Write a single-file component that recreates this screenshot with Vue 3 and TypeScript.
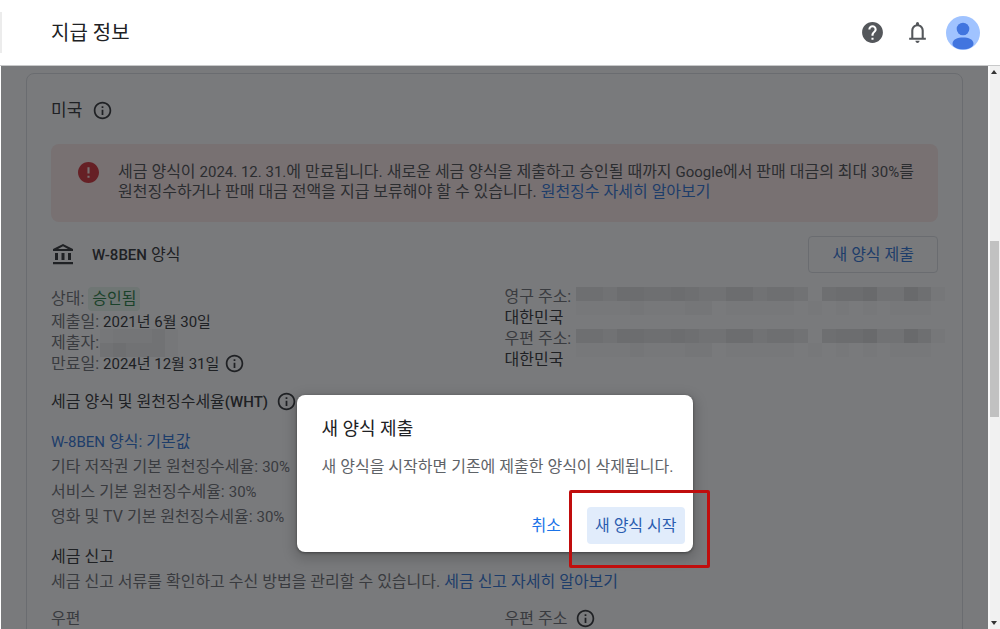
<script setup lang="ts">
interface Rate {
  label: string
  value: string
}

const rates: Rate[] = [
  { label: '기타 저작권 기본 원천징수세율:', value: '30%' },
  { label: '서비스 기본 원천징수세율:', value: '30%' },
  { label: '영화 및 TV 기본 원천징수세율:', value: '30%' },
]

// Strength of each masking cell, from 0 (clear) to 7 (darkest)
const maskTop = [4, 4, 3, 5, 5, 4, 4, 5, 4, 3, 3, 5, 5, 3, 4, 4, 3, 0, 4, 5, 5, 6, 3, 3, 6, 4, 1]
const maskBottom = [1, 1, 1, 1, 2, 1, 1, 1, 2, 2, 0, 1, 1, 1, 1, 1, 0, 1, 0, 1, 0, 1, 0, 1, 1, 1, 0]
const addressMask = [...maskTop.map((n) => n * 0.03), ...maskBottom.map((n) => n * 0.02)]
const nameMask = [1, 2, 2, 2, 3, 1, 3, 4, 3, 3, 3, 1].map((n) => n * 0.03)
const addresses = ['영구 주소:', '우편 주소:']
</script>

<template>
  <div class="page">
    <header class="topbar">
      <h1>지급 정보</h1>
      <button class="icon-btn" type="button" aria-label="도움말">
        <svg width="25" height="25" viewBox="0 0 24 24" fill="#54575b">
          <path d="M12 2C6.48 2 2 6.48 2 12s4.48 10 10 10 10-4.48 10-10S17.52 2 12 2zm1 17h-2v-2h2v2zm2.07-7.75-.9.92C13.45 12.9 13 13.5 13 15h-2v-.5c0-1.1.45-2.1 1.17-2.83l1.24-1.26c.37-.36.59-.86.59-1.41 0-1.1-.9-2-2-2s-2 .9-2 2H8c0-2.21 1.79-4 4-4s4 1.79 4 4c0 .88-.36 1.68-.93 2.25z" />
        </svg>
      </button>
      <button class="icon-btn bell" type="button" aria-label="알림">
        <svg width="25" height="25" viewBox="0 0 24 24" fill="#54575b">
          <path d="M4 19v-2h2v-7c0-2.8 1.7-5.1 4.5-5.8v-.7a1.5 1.5 0 0 1 3 0v.7C16.300 4.900 18 7.200 18 10v7h2v2zM12 22c-1.100 0-2-.9-2-2h4c0 1.100-.9 2-2 2zM8 17h8v-7c0-2.200-1.800-4-4-4s-4 1.800-4 4z" />
        </svg>
      </button>
      <button class="icon-btn" type="button" aria-label="계정">
        <svg width="34" height="34" viewBox="0 0 34 34">
          <defs><clipPath id="face"><circle cx="17" cy="17" r="17" /></clipPath></defs>
          <g clip-path="url(#face)">
            <rect width="34" height="34" fill="#a0c3ff" />
            <circle cx="17" cy="13" r="6.300" fill="#4175df" />
            <path d="M6.500 28c0-5 5-6.500 10.500-6.500S27.500 23 27.500 28c0 3-5 5.300-10.500 5.300S6.500 31 6.500 28z" fill="#4175df" />
          </g>
        </svg>
      </button>
    </header>

    <div class="body">
      <main class="content">
        <section class="card">
          <div class="country">
            <h2>미국</h2>
            <svg class="info" viewBox="0 0 24 24"><path d="M11 7h2v2h-2zm0 4h2v6h-2zm1-9C6.480 2 2 6.480 2 12s4.480 10 10 10 10-4.480 10-10S17.520 2 12 2zm0 18c-4.410 0-8-3.590-8-8s3.590-8 8-8 8 3.590 8 8-3.590 8-8 8z" /></svg>
          </div>

          <div class="alert" role="alert">
            <svg class="alert-icon" viewBox="2 2 20 20"><path d="M12 2C6.480 2 2 6.480 2 12s4.480 10 10 10 10-4.480 10-10S17.520 2 12 2zm1 15h-2v-2h2v2zm0-4h-2V7h2v6z" /></svg>
            <p>
              세금 양식이 <span class="latin">2024. 12. 31.</span>에 만료됩니다. 새로운 세금 양식을 제출하고 승인될 때까지 <span class="latin">Google</span>에서 판매 대금의 최대 <span class="latin">30%</span>를<br />
              원천징수하거나 판매 대금 전액을 지급 보류해야 할 수 있습니다. <a href="#">원천징수 자세히 알아보기</a>
            </p>
          </div>

          <div class="form-head">
            <svg class="bank" viewBox="0 0 24 24"><path d="M7 10H4v7h3zM13.500 10h-3v7h3zM22 19H2v2.200h20zM20 10h-3v7h3zM12 3.300 17 6H7zM12 1 2 6v2h20V6z" /></svg>
            <h3><span class="latin">W-8BEN</span> 양식</h3>
            <button class="outline-btn" type="button">새 양식 제출</button>
          </div>

          <div class="columns details">
            <div class="left">
              <p class="status">상태: <span class="pill">승인됨</span></p>
              <p>제출일: <b class="latin">2021년 6월 30일</b></p>
              <p class="masked">
                제출자:
                <span class="mask mask-name"><i v-for="(a, i) in nameMask" :key="i" :style="{ opacity: a }"></i></span>
              </p>
              <p class="with-icon">
                <span>만료일: <b class="latin">2024년 12월 31일</b></span>
                <svg class="info" viewBox="0 0 24 24"><path d="M11 7h2v2h-2zm0 4h2v6h-2zm1-9C6.480 2 2 6.480 2 12s4.480 10 10 10 10-4.480 10-10S17.520 2 12 2zm0 18c-4.410 0-8-3.590-8-8s3.590-8 8-8 8 3.590 8 8-3.590 8-8 8z" /></svg>
              </p>
            </div>
            <div>
              <template v-for="label in addresses" :key="label">
                <p class="masked">
                  {{ label }}
                  <span class="mask mask-address"><i v-for="(a, i) in addressMask" :key="i" :style="{ opacity: a }"></i></span>
                </p>
                <p><b>대한민국</b></p>
              </template>
            </div>
          </div>

          <div class="with-icon wht">
            <h3>세금 양식 및 원천징수세율<span class="latin">(WHT)</span></h3>
            <svg class="info" viewBox="0 0 24 24"><path d="M11 7h2v2h-2zm0 4h2v6h-2zm1-9C6.480 2 2 6.480 2 12s4.480 10 10 10 10-4.480 10-10S17.520 2 12 2zm0 18c-4.410 0-8-3.590-8-8s3.590-8 8-8 8 3.590 8 8-3.590 8-8 8z" /></svg>
          </div>

          <div class="rates">
            <p><a href="#"><span class="latin">W-8BEN</span> 양식: 기본값</a></p>
            <p v-for="r in rates" :key="r.label">{{ r.label }} <span class="latin">{{ r.value }}</span></p>
          </div>

          <div class="report">
            <h3>세금 신고</h3>
            <p>세금 신고 서류를 확인하고 수신 방법을 관리할 수 있습니다. <a href="#">세금 신고 자세히 알아보기</a></p>
          </div>

          <div class="columns post">
            <p>우편</p>
            <p class="with-icon">
              <span>우편 주소</span>
              <svg class="info" viewBox="0 0 24 24"><path d="M11 7h2v2h-2zm0 4h2v6h-2zm1-9C6.480 2 2 6.480 2 12s4.480 10 10 10 10-4.480 10-10S17.520 2 12 2zm0 18c-4.410 0-8-3.590-8-8s3.590-8 8-8 8 3.590 8 8-3.590 8-8 8z" /></svg>
            </p>
          </div>
        </section>

        <div class="scrim">
          <div class="dialog" role="dialog" aria-modal="true" aria-labelledby="dialog-title">
            <h2 id="dialog-title">새 양식 제출</h2>
            <p>새 양식을 시작하면 기존에 제출한 양식이 삭제됩니다.</p>
            <div class="actions">
              <button type="button">취소</button>
              <div class="marked">
                <button class="primary" type="button">새 양식 시작</button>
              </div>
            </div>
          </div>
        </div>
      </main>

      <div class="scrollbar" aria-hidden="true">
        <svg class="arrow" width="6" height="4" viewBox="0 0 6 4"><path d="M0 4 3 0l3 4z" /></svg>
        <div class="thumb"></div>
        <svg class="arrow down" width="6" height="4" viewBox="0 0 6 4"><path d="M0 0h6L3 4z" /></svg>
      </div>
    </div>
  </div>
</template>

<style>
body {
  background: #fff;
}
</style>

<style scoped>
.page {
  display: flex;
  flex-direction: column;
  height: 100vh;
  overflow: hidden;
  font-family: Roboto, "Noto Sans CJK KR", sans-serif;
  font-size: 16px;
  line-height: 21px;
  color: #5f6368;
}
h1, h2, h3, p {
  margin: 0;
  font-size: inherit;
  font-weight: 400;
}
button {
  font: inherit;
  border: 0;
  padding: 0;
  background: none;
  cursor: pointer;
}
a {
  color: #1967d2;
  text-decoration: none;
}
b, h2, h3 {
  color: #202124;
}
b {
  font-weight: 400;
}
.latin {
  font-size: 15px;
  line-height: 1;
}
h3 .latin {
  font-weight: 500;
}
.topbar {
  flex: none;
  position: relative;
  display: flex;
  align-items: center;
  height: 65px;
  padding: 0 20px 0 51px;
  border-bottom: 1px solid #c8c9ca;
}
.topbar::before {
  content: "";
  position: absolute;
  left: 0;
  top: 12px;
  width: 2px;
  height: 41px;
  background: #ececec;
}
h1 {
  flex: 1;
  font-size: 20px;
  line-height: 28px;
  color: #202124;
}
.icon-btn {
  display: flex;
}
.bell {
  margin: 0 16px 0 20px;
}
.body {
  flex: 1;
  min-height: 0;
  display: flex;
  padding-left: 1px;
}
.content {
  flex: 1;
  position: relative;
  overflow: hidden;
  padding: 7px 25px 0;
}
.card {
  border: 1px solid #dadce0;
  border-radius: 8px;
  padding: 24px;
}
.country {
  display: flex;
  align-items: center;
  gap: 10px;
  height: 24px;
}
.country h2 {
  font-size: 17px;
}
.info {
  flex: none;
  width: 21px;
  height: 21px;
  fill: #202124;
}
.alert {
  display: flex;
  gap: 19px;
  margin-top: 22px;
  padding: 18px 12px 20px 27px;
  border-radius: 8px;
  background: #fce8e6;
  color: #3c4043;
  line-height: 20px;
}
.alert p {
  white-space: nowrap;
}
.alert-icon {
  flex: none;
  width: 21px;
  height: 21px;
  fill: #cf2027;
}
.form-head {
  display: flex;
  align-items: center;
  margin-top: 14px;
}
.bank {
  width: 24px;
  height: 24px;
  margin-right: 17px;
  fill: #202124;
}
.form-head h3 {
  flex: 1;
}
.outline-btn {
  height: 37px;
  padding: 0 23px;
  border: 1px solid #dadce0;
  border-radius: 4px;
  color: #1967d2;
}
.columns {
  display: grid;
  grid-template-columns: 1fr 1fr;
  column-gap: 20px;
}
.details {
  margin-top: 13px;
}
.left {
  padding-top: 1px;
}
.status {
  line-height: 24px;
}
.pill {
  display: inline-block;
  padding: 0 4px;
  border-radius: 4px;
  background: #e6f4ea;
  color: #137333;
}
.masked {
  display: flex;
  position: relative;
}
.mask {
  display: grid;
  grid-auto-rows: 14px;
}
.mask i {
  background: #202124;
}
.mask-name {
  position: absolute;
  left: 49px;
  top: -3px;
  width: 78px;
  grid-template-columns: repeat(6, 1fr);
}
.mask-address {
  position: absolute;
  left: 71px;
  right: -7px;
  top: 1px;
  grid-template-columns: repeat(27, 1fr);
}
.with-icon {
  display: flex;
  align-items: center;
  gap: 5px;
}
.wht {
  gap: 8px;
  margin-top: 17px;
}
.rates {
  margin-top: 17px;
  line-height: 25px;
}
.report {
  margin-top: 15px;
  line-height: 25px;
}
.post {
  margin-top: 12px;
  line-height: 25px;
}
.post .with-icon {
  gap: 8px;
}
.scrim {
  position: absolute;
  inset: 0;
  display: flex;
  justify-content: center;
  align-items: flex-start;
  padding-top: 329px;
  background: rgba(32, 33, 36, 0.6);
}
.dialog {
  width: 396px;
  box-sizing: border-box;
  padding: 22px 8px 8px 25px;
  border-radius: 8px;
  background: #fff;
  box-shadow: 0 1px 3px rgba(0, 0, 0, 0.4), 0 4px 12px 4px rgba(0, 0, 0, 0.15);
  line-height: 24px;
}
.dialog h2 {
  font-size: 18px;
}
.dialog p {
  margin-top: 14px;
  white-space: nowrap;
}
.actions {
  display: flex;
  justify-content: flex-end;
  gap: 18px;
  margin-top: 28px;
}
.actions button {
  height: 37px;
  padding: 0 8px;
  border-radius: 4px;
  color: #1a73e8;
}
.actions .primary {
  background: #e1ecfb;
  color: #2a5db0;
}
.marked {
  position: relative;
}
.marked::after {
  content: "";
  position: absolute;
  inset: -17px -25px -24px -18px;
  border: 3px solid #c00d0d;
  border-radius: 2px;
  pointer-events: none;
}
.scrollbar {
  flex: none;
  display: flex;
  flex-direction: column;
  align-items: flex-start;
  width: 10px;
  border-left: 2px solid #fafafa;
  background: #f1f1f1;
}
.arrow {
  margin: 4px 1px;
  fill: #333;
}
.thumb {
  width: 9px;
  height: 176px;
  margin-top: 163px;
  background: #c1c1c1;
}
.down {
  margin-top: auto;
}
</style>
